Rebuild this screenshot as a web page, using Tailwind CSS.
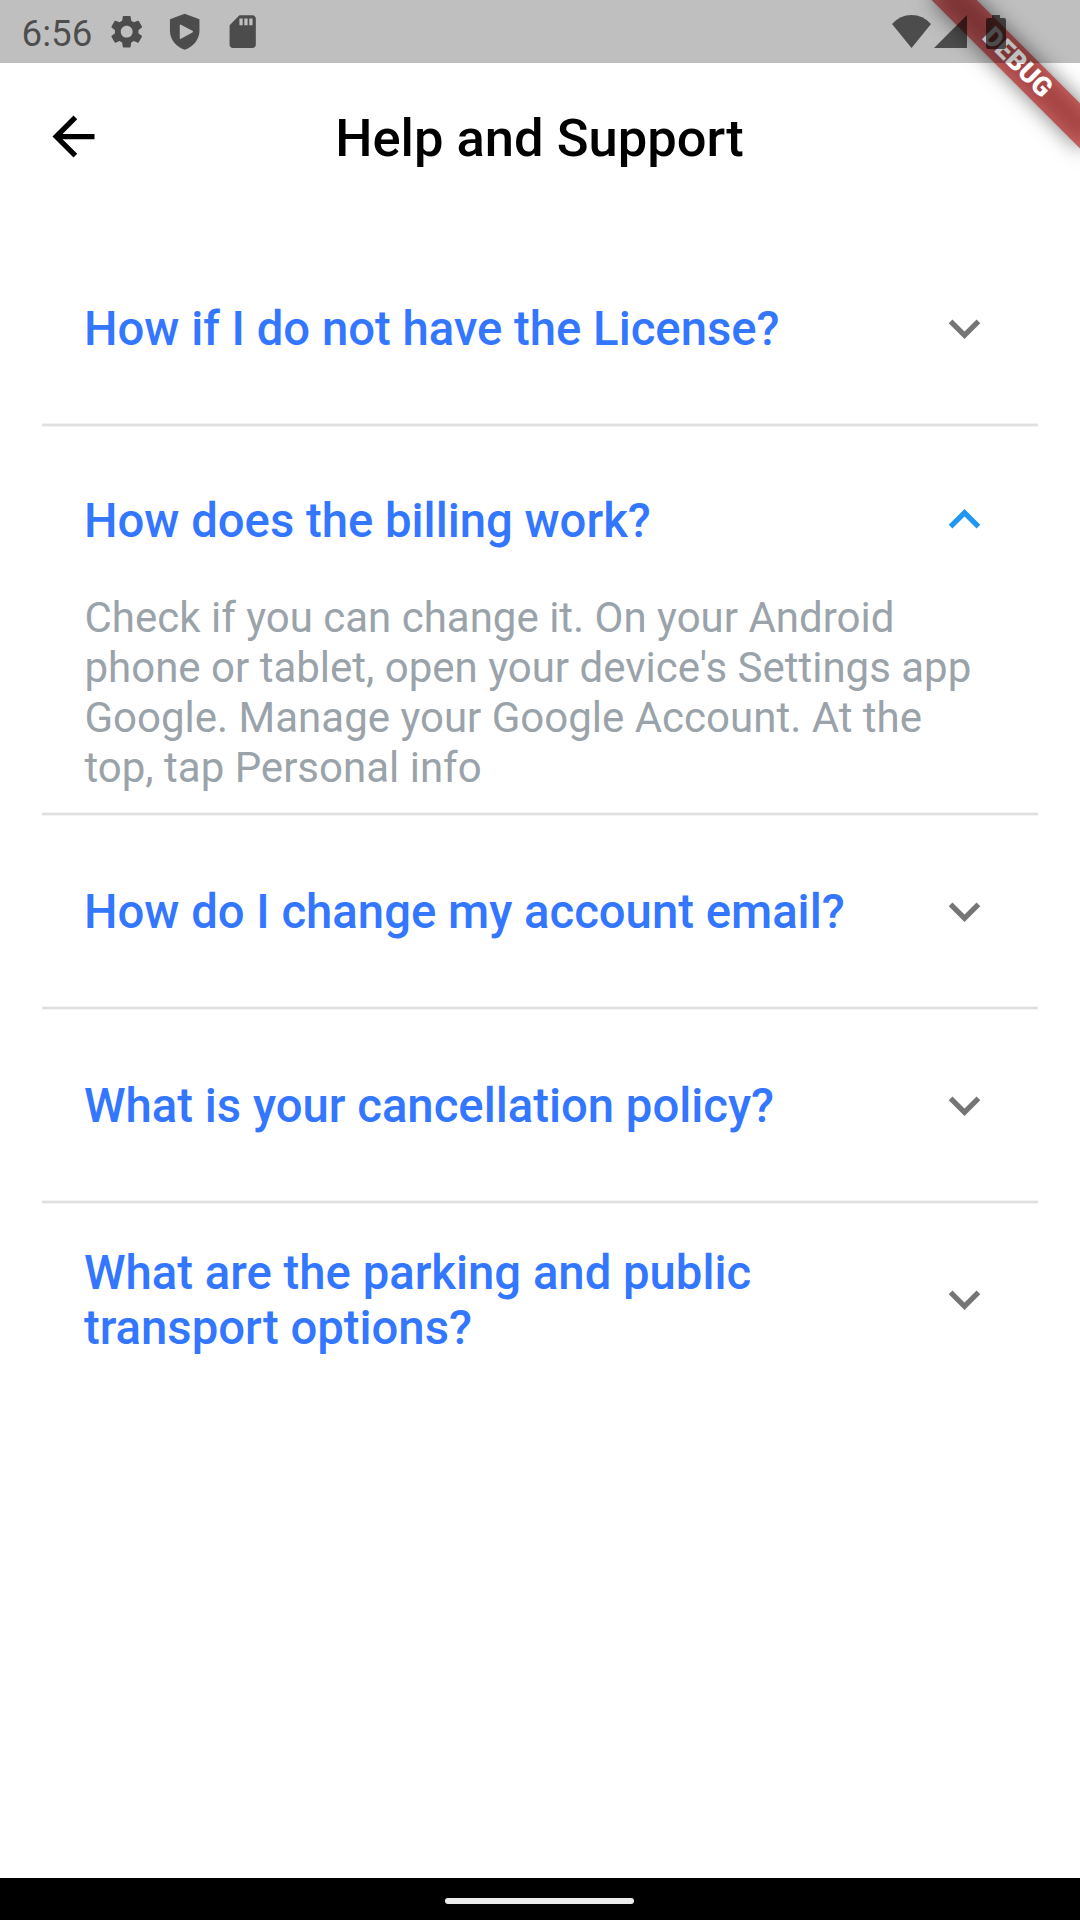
<!DOCTYPE html>
<html lang="en">
<head>
<meta charset="utf-8">
<meta name="viewport" content="width=device-width">
<title>Help and Support</title>
<script src="https://cdn.jsdelivr.net/npm/@tailwindcss/browser@4"></script>
</head>
<body class="bg-white">
<svg class="hidden">
  <symbol id="more" viewBox="0 0 24 24"><path d="M16.59 8.59L12 13.17 7.41 8.59 6 10l6 6 6-6z"/></symbol>
</svg>
<div class="relative flex h-[1920px] w-[1080px] flex-col overflow-hidden bg-white font-[Roboto,sans-serif]">

  <!-- Corner ribbon, under the status bar -->
  <div class="absolute top-[73px] -right-[105px] h-[31.5px] w-[210px] origin-[50%_-73px] rotate-45">
    <div class="absolute inset-0 bg-black/50 blur-[10.4px]"></div>
    <div class="absolute inset-0 flex items-center justify-center bg-[#b71c1c]/63 text-[26.8px] leading-none font-black text-white">DEBUG</div>
  </div>

  <!-- Status bar -->
  <div class="relative flex h-[63px] shrink-0 items-center justify-between bg-black/25 pr-[73px] pl-[21.5px] text-black/60">
    <div class="flex items-center gap-[18.6px]">
      <span class="w-[66.8px] pt-[6px] text-[36.75px] leading-none whitespace-nowrap">6:56</span>
      <svg class="size-[39.4px]" viewBox="0 0 24 24" fill="currentColor"><path d="M19.14 12.94c.04-.3.06-.61.06-.94 0-.32-.02-.64-.07-.94l2.03-1.58c.18-.14.23-.41.12-.61l-1.92-3.32c-.12-.22-.37-.29-.59-.22l-2.39.96c-.5-.38-1.03-.7-1.62-.94l-.36-2.54c-.04-.24-.24-.41-.48-.41h-3.84c-.24 0-.43.17-.47.41l-.36 2.54c-.59.24-1.13.57-1.62.94l-2.39-.96c-.22-.08-.47 0-.59.22L2.74 8.87c-.12.21-.08.47.12.61l2.03 1.58c-.05.3-.09.63-.09.94s.02.64.07.94l-2.03 1.58c-.18.14-.23.41-.12.61l1.92 3.32c.12.22.37.29.59.22l2.39-.96c.5.38 1.03.7 1.62.94l.36 2.54c.05.24.24.41.48.41h3.84c.24 0 .44-.17.47-.41l.36-2.54c.59-.24 1.13-.56 1.62-.94l2.39.96c.22.08.47 0 .59-.22l1.92-3.32c.12-.22.07-.47-.12-.61l-2.01-1.58zM12 15.6c-1.98 0-3.6-1.62-3.6-3.6s1.62-3.6 3.6-3.6 3.6 1.62 3.6 3.6-1.62 3.6-3.6 3.6z"/></svg>
      <svg class="size-[39.4px]" viewBox="0 0 24 24" fill="currentColor" fill-rule="evenodd"><path d="M12 1L3 4.4v7.1c0 5.3 3.8 9.9 9 11.5 5.2-1.6 9-6.2 9-11.5V4.4zM9.7 7.7q-.7-.3-.7.5v7.6q0 .8.7.5l7-3.8q.8-.5 0-1z"/></svg>
      <svg class="size-[39.4px]" viewBox="0 0 24 24" fill="currentColor"><path d="M18 2h-8L4.02 8 4 20c0 1.1.9 2 2 2h12c1.1 0 2-.9 2-2V4c0-1.1-.9-2-2-2zm-6 6h-2V4h2v4zm3 0h-2V4h2v4zm3 0h-2V4h2v4z"/></svg>
    </div>
    <svg class="h-[36px] w-[116px]" viewBox="891 13 116 36" fill="currentColor">
      <path d="M911.5 47L892 23Q900 14 911.5 14T931 23z"/>
      <path d="M934 47L967 14V47z"/>
      <path d="M992 17V14h8v3h4q2 0 2 2v27q0 2-2 2h-16q-2 0-2-2V19q0-2 2-2z"/>
    </svg>
  </div>

  <!-- App bar -->
  <header class="grid h-[147px] shrink-0 grid-cols-[147px_1fr_147px] items-center">
    <svg class="ml-[42px] size-[63px]" viewBox="0 0 24 24"><path d="M20 11H7.83l5.59-5.59L12 4l-8 8 8 8 1.41-1.41L7.83 13H20v-2z"/></svg>
    <h1 class="pt-[4px] pr-[1px] text-center text-[52.5px] leading-none font-medium text-black">Help and Support</h1>
  </header>

  <!-- Questions -->
  <main class="flex flex-1 flex-col px-[42px] pt-[23px] text-[47.25px] leading-[55px] font-medium text-[#3376ff]">
    <section class="flex h-[190px] items-center justify-between px-[42px] pt-[1px]">
      <h2 class="pt-[2px]">How if I do not have the License?</h2>
      <svg class="size-[63px] fill-[#757575]"><use href="#more"/></svg>
    </section>
    <hr class="h-[4px] shrink-0 border-y border-[#f3f3f3] bg-[#e0e0e0]">
    <section class="h-[385px]">
      <div class="flex h-[185px] items-center justify-between px-[42px]">
        <h2 class="pt-[4px]">How does the billing work?</h2>
        <svg class="size-[63px] rotate-180 fill-[#2196f3]"><use href="#more"/></svg>
      </div>
      <p class="-mt-[19px] pl-[42.5px] text-[42px] leading-[50px] font-normal text-[#9aa3aa]">Check if you can change it. On your Android<br>phone or tablet, open your device's Settings app<br>Google. Manage your Google Account. At the<br>top, tap Personal info</p>
    </section>
    <hr class="h-[4px] shrink-0 border-y border-[#f3f3f3] bg-[#e0e0e0]">
    <section class="flex h-[190px] items-center justify-between px-[42px] pt-[1px]">
      <h2 class="pt-[2px]">How do I change my account email?</h2>
      <svg class="size-[63px] fill-[#757575]"><use href="#more"/></svg>
    </section>
    <hr class="h-[4px] shrink-0 border-y border-[#f3f3f3] bg-[#e0e0e0]">
    <section class="flex h-[190px] items-center justify-between px-[42px] pt-[1px]">
      <h2 class="pt-[2px]">What is your cancellation policy?</h2>
      <svg class="size-[63px] fill-[#757575]"><use href="#more"/></svg>
    </section>
    <hr class="h-[4px] shrink-0 border-y border-[#f3f3f3] bg-[#e0e0e0]">
    <section class="flex h-[190px] items-center justify-between px-[42px] pt-[1px]">
      <h2 class="pt-[3px]">What are the parking and public<br>transport options?</h2>
      <svg class="size-[63px] fill-[#757575]"><use href="#more"/></svg>
    </section>
  </main>

  <!-- Gesture navigation bar -->
  <footer class="flex h-[42px] shrink-0 justify-center bg-black pt-[20px] pr-[1px]">
    <div class="h-[6px] w-[189px] rounded-full bg-[#ececec]"></div>
  </footer>
</div>
</body>
</html>
